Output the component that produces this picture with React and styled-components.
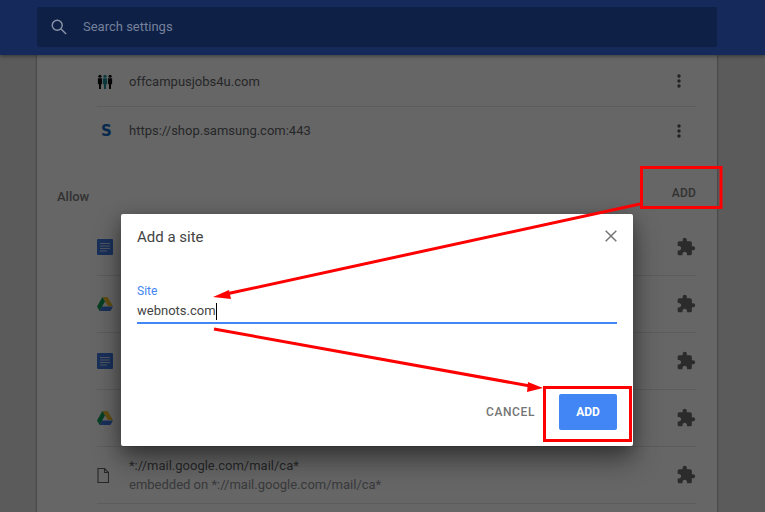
import React from 'react';
import styled, { createGlobalStyle } from 'styled-components';

const Global = createGlobalStyle`
  html, body { margin: 0; padding: 0; background: #5b5b5b; }
  body { font-family: Roboto, "Liberation Sans", sans-serif; }
`;

const Page = styled.div`
  position: relative;
  width: 765px;
  height: 512px;
  overflow: hidden;
  background: #e4e4e4;
  display: flex;
  flex-direction: column;
`;
const Header = styled.header`
  position: relative;
  z-index: 3;
  flex: none;
  height: 55px;
  box-sizing: border-box;
  padding: 7px 48px 8px 37px;
  background: #15295b;
  box-shadow: 0 1px 4px rgba(0, 0, 0, 0.45);
`;
const SearchBar = styled.div`
  height: 40px;
  box-sizing: border-box;
  padding: 0 0 1px 14px;
  display: flex;
  align-items: center;
  gap: 16px;
  border-radius: 2px;
  background: #0f2046;
  color: #75819b;
  font-size: 13px;
`;
const Card = styled.main`
  flex: 1;
  width: 680px;
  box-sizing: border-box;
  margin-left: 37px;
  padding: 1px 20px 0;
  background: #fff;
  box-shadow: 0 0 2px rgba(0, 0, 0, 0.6);
  display: flex;
  flex-direction: column;
`;
const Row = styled.div`
  flex: none;
  height: ${p => p.$h}px;
  margin-left: 40px;
  margin-right: 1px;
  display: flex;
  align-items: center;
  box-sizing: border-box;
  border-bottom: ${p => (p.$last ? 'none' : '1px solid #e6e6e6')};
  font-size: 13px;
  color: #5f6368;
`;
const IconSlot = styled.span`
  width: 32px;
  flex: none;
  display: flex;
  align-items: center;
`;
const SiteText = styled.div`
  flex: 1;
  line-height: 19px;
`;
const SubText = styled.div`
  color: #8f9296;
`;
const SLogo = styled.span`
  font-family: "DejaVu Sans", sans-serif;
  font-weight: 700;
  font-size: 15px;
  line-height: 16px;
  color: #1268c4;
  margin-left: 4px;
`;
const MoreSlot = styled.span`
  width: 36px;
  display: flex;
  justify-content: center;
  margin-right: -1px;
`;
const PuzzleSlot = styled.span`
  flex: none;
  display: flex;
`;
const SectionHead = styled.div`
  flex: none;
  height: 65px;
  display: flex;
  justify-content: space-between;
  font-size: 13px;
  font-weight: 500;
  color: #7d7d7d;
`;
const SectionTitle = styled.span`
  margin-top: 35px;
`;
const SectionAction = styled.span`
  margin-top: 32px;
  padding-right: 1px;
  font-size: 12px;
  letter-spacing: 0.2px;
`;
const Scrim = styled.div`
  position: absolute;
  inset: 0;
  z-index: 2;
  background: rgba(0, 0, 0, 0.6);
`;
const Dialog = styled.section`
  position: absolute;
  z-index: 3;
  left: 121px;
  top: 214px;
  width: 512px;
  height: 232px;
  box-sizing: border-box;
  padding: 14px 16px 16px;
  display: flex;
  flex-direction: column;
  background: #fff;
  border-radius: 2px;
  box-shadow: 0 14px 28px rgba(0, 0, 0, 0.4), 0 4px 16px rgba(0, 0, 0, 0.25);
`;
const DialogHead = styled.div`
  display: flex;
  justify-content: space-between;
  align-items: center;
  height: 18px;
  font-size: 15px;
  color: #444;
`;
const CloseBtn = styled.span`
  display: flex;
  margin-top: -2px;
`;
const Field = styled.div`
  margin-top: 39px;
  border-bottom: 2px solid #4285f4;
  padding-bottom: 2px;
`;
const FieldLabel = styled.div`
  font-size: 12px;
  line-height: 13px;
  color: #4285f4;
`;
const FieldValue = styled.div`
  margin-top: 4px;
  display: flex;
  align-items: center;
  font-size: 13px;
  line-height: 18px;
  color: #444;
`;
const Caret = styled.span`
  width: 1px;
  height: 17px;
  background: #000;
`;
const Footer = styled.div`
  margin-top: auto;
  display: flex;
  justify-content: flex-end;
  align-items: center;
  gap: 24px;
`;
const CancelBtn = styled.span`
  font-size: 12px;
  font-weight: 500;
  color: #757575;
  letter-spacing: 0.6px;
`;
const AddBtn = styled.span`
  width: 58px;
  height: 36px;
  display: flex;
  align-items: center;
  justify-content: center;
  background: #4285f4;
  color: #fff;
  border-radius: 2px;
  font-size: 12px;
  font-weight: 700;
`;
const Annotations = styled.svg`
  position: absolute;
  inset: 0;
  z-index: 4;
  pointer-events: none;
`;

const SearchIcon = () => (
  <svg width="16" height="16" viewBox="0 0 18 18" fill="none" stroke="#8a94a8" strokeWidth="1.6">
    <circle cx="7" cy="7" r="5.6" />
    <path d="M11 11 17 17" />
  </svg>
);
const People = () => (
  <svg width="16" height="15" viewBox="0 0 16 16">
    <g fill="#111">
      <circle cx="2.6" cy="2.4" r="1.7" /><path d="M.4 4.6h4.4v6.4H3.7v5H1.6v-5H.4z" />
      <circle cx="13.4" cy="2.4" r="1.7" /><path d="M11.2 4.6h4.4v6.4h-1.2v5h-2.1v-5h-1.1z" />
    </g>
    <g fill="#1a8d94">
      <circle cx="8" cy="2.4" r="1.7" /><path d="M5.8 4.6h4.4v6.4H9.1v5H6.9v-5H5.8z" />
    </g>
  </svg>
);
const More = () => (
  <svg width="4" height="14" viewBox="0 0 4 14" fill="#555">
    <circle cx="2" cy="2" r="1.7" /><circle cx="2" cy="7" r="1.7" /><circle cx="2" cy="12" r="1.7" />
  </svg>
);
const Doc = () => (
  <svg width="16" height="16" viewBox="0 0 16 16">
    <rect width="16" height="16" rx="1" fill="#3f78e0" />
    <path d="M3 4.5h10M3 7h10M3 9.5h10M3 12h7" stroke="#c9d8f5" strokeWidth="1" />
  </svg>
);
const Drive = () => (
  <svg width="16" height="14" viewBox="0 0 16 14">
    <path d="M5.4 0h5.2l5.4 9h-5.2z" fill="#f4c430" />
    <path d="M5.4 0 8 4.5 2.6 14 0 9.5z" fill="#0f9d58" />
    <path d="M5 9.5h11L13.4 14H2.6z" fill="#3f78e0" />
  </svg>
);
const Page2 = () => (
  <svg width="12" height="15" viewBox="0 0 12 15" fill="none" stroke="#5f6368" strokeWidth="1.1">
    <path d="M1 .5h6.5l4 4v10H1z" /><path d="M7.5.5v4h4" />
  </svg>
);
const Puzzle = () => (
  <svg width="20" height="20" viewBox="0 0 24 24" fill="#6b6b6b">
    <path d="M20.5 11H19V7c0-1.1-.9-2-2-2h-4V3.5C13 2.12 11.88 1 10.5 1S8 2.12 8 3.5V5H4c-1.1 0-1.99.9-1.99 2v3.8H3.5c1.49 0 2.7 1.21 2.7 2.7s-1.21 2.7-2.7 2.7H2V20c0 1.1.9 2 2 2h3.8v-1.5c0-1.49 1.21-2.7 2.7-2.7 1.49 0 2.7 1.21 2.7 2.7V22H17c1.1 0 2-.9 2-2v-4h1.5c1.38 0 2.5-1.12 2.5-2.5S21.88 11 20.5 11z" />
  </svg>
);
const Close = () => (
  <svg width="12" height="12" viewBox="0 0 12 12" stroke="#757575" strokeWidth="1.5">
    <path d="M.7.7l10.6 10.6M11.3.7.7 11.3" />
  </svg>
);

const allowed = [<Doc />, <Drive />, <Doc />, <Drive />];

export default function App() {
  return (
    <Page>
      <Global />
      <Header>
        <SearchBar><SearchIcon />Search settings</SearchBar>
      </Header>
      <Card>
        <Row $h={51}>
          <IconSlot><People /></IconSlot>
          <SiteText>offcampusjobs4u.com</SiteText>
          <MoreSlot><More /></MoreSlot>
        </Row>
        <Row $h={47} $last>
          <IconSlot><SLogo>S</SLogo></IconSlot>
          <SiteText>https://shop.samsung.com:443</SiteText>
          <MoreSlot><More /></MoreSlot>
        </Row>
        <SectionHead>
          <SectionTitle>Allow</SectionTitle>
          <SectionAction>ADD</SectionAction>
        </SectionHead>
        {allowed.map((icon, i) => (
          <Row key={i} $h={57}>
            <IconSlot>{icon}</IconSlot>
            <SiteText />
            <PuzzleSlot><Puzzle /></PuzzleSlot>
          </Row>
        ))}
        <Row $h={57}>
          <IconSlot><Page2 /></IconSlot>
          <SiteText>
            *://mail.google.com/mail/ca*
            <SubText>embedded on *://mail.google.com/mail/ca*</SubText>
          </SiteText>
          <PuzzleSlot><Puzzle /></PuzzleSlot>
        </Row>
      </Card>
      <Scrim />
      <Dialog>
        <DialogHead>Add a site<CloseBtn><Close /></CloseBtn></DialogHead>
        <Field>
          <FieldLabel>Site</FieldLabel>
          <FieldValue>webnots.com<Caret /></FieldValue>
        </Field>
        <Footer>
          <CancelBtn>CANCEL</CancelBtn>
          <AddBtn>ADD</AddBtn>
        </Footer>
      </Dialog>
      <Annotations width="765" height="512" viewBox="0 0 765 512">
        <g fill="none" stroke="#ff0000" strokeWidth="3">
          <rect x="641.5" y="167.5" width="79.5" height="40" />
          <rect x="544.5" y="387.5" width="86" height="53" />
          <path d="M640 204 226 294" />
          <path d="M214 329 530 386" />
        </g>
        <g fill="#ff0000">
          <path d="M213 297 229 290 231 299z" />
          <path d="M543 388 528 382 527 392z" />
        </g>
      </Annotations>
    </Page>
  );
}
